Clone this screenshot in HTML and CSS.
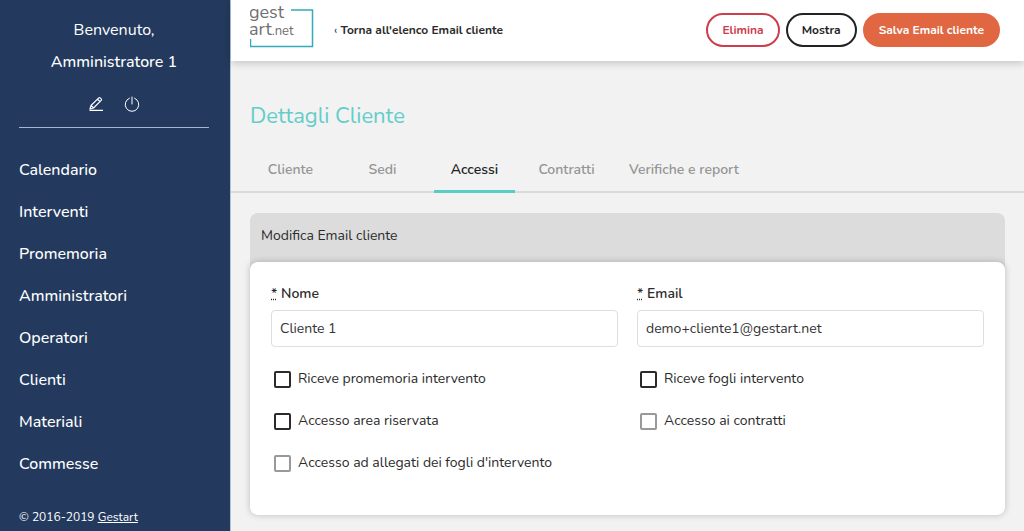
FILE: index.html
```html
<!DOCTYPE html>
<html lang="it">
<head>
<meta charset="utf-8">
<meta name="viewport" content="width=device-width, initial-scale=1">
<title>Dettagli Cliente</title>
<link rel="stylesheet" href="styles.css">
</head>
<body>
<div class="app">
  <aside class="sidebar">
    <div class="welcome">
      <p class="welcome-line">Benvenuto,</p>
      <p class="welcome-line welcome-name">Amministratore 1</p>
      <div class="welcome-actions">
        <a href="#" class="icon-link" aria-label="Modifica profilo">
          <svg width="16" height="16" viewBox="0 0 16 16" fill="none" stroke="currentColor" stroke-width="1.200" stroke-linejoin="round"><path d="M3 9.500 10.800 1.900Q11.500 1.300 12.200 1.900L13.200 2.900Q13.900 3.600 13.200 4.300L5.500 12 2 13zM9.500 3.200 12 5.600M3 9.500 5.500 12M1.500 14.400H15"/></svg>
        </a>
        <a href="#" class="icon-link" aria-label="Esci">
          <svg width="16" height="16" viewBox="0 0 16 16" fill="none" stroke="currentColor" stroke-linecap="round"><path d="M8 1V8M5.400 2.200A6.800 6.800 0 1 0 10.600 2.200"/></svg>
        </a>
      </div>
    </div>
    <nav class="menu">
      <a href="#">Calendario</a>
      <a href="#">Interventi</a>
      <a href="#">Promemoria</a>
      <a href="#">Amministratori</a>
      <a href="#">Operatori</a>
      <a href="#">Clienti</a>
      <a href="#">Materiali</a>
      <a href="#">Commesse</a>
    </nav>
    <footer class="copyright">© 2016-2019 <a href="#">Gestart</a></footer>
  </aside>
  <div class="content">
    <header class="topbar">
      <a href="#" class="logo" aria-label="gestart.net">
        <svg width="64" height="48" viewBox="0 0 64 48">
          <path d="M41 10H62.500V46.500H0.500V39" fill="none" stroke="#35a9bd" stroke-width="1.500"/>
          <text class="logo-text" x="-1" y="18">gest</text>
          <text class="logo-text" x="-1" y="35">art<tspan class="logo-small">.net</tspan></text>
        </svg>
      </a>
      <a href="#" class="back"><span class="chevron">‹</span> Torna all'elenco Email cliente</a>
      <div class="actions">
        <button type="button" class="btn btn-danger">Elimina</button>
        <button type="button" class="btn btn-dark">Mostra</button>
        <button type="submit" form="client-form" class="btn btn-primary">Salva Email cliente</button>
      </div>
    </header>
    <main>
      <h1 class="title">Dettagli Cliente</h1>
      <nav class="tabs">
        <a href="#" class="tab">Cliente</a>
        <a href="#" class="tab">Sedi</a>
        <a href="#" class="tab active" aria-current="page">Accessi</a>
        <a href="#" class="tab">Contratti</a>
        <a href="#" class="tab">Verifiche e report</a>
      </nav>
      <section class="panel">
        <h2 class="panel-title">Modifica Email cliente</h2>
        <form class="card" id="client-form">
          <div class="field">
            <label for="name"><abbr title="obbligatorio">*</abbr> Nome</label>
            <input type="text" id="name" value="Cliente 1">
          </div>
          <div class="field">
            <label for="email"><abbr title="obbligatorio">*</abbr> Email</label>
            <input type="email" id="email" value="demo+cliente1@gestart.net">
          </div>
          <label class="check"><input type="checkbox"> Riceve promemoria intervento</label>
          <label class="check"><input type="checkbox"> Riceve fogli intervento</label>
          <label class="check"><input type="checkbox"> Accesso area riservata</label>
          <label class="check"><input type="checkbox" disabled> Accesso ai contratti</label>
          <label class="check"><input type="checkbox" disabled> Accesso ad allegati dei fogli d'intervento</label>
        </form>
      </section>
    </main>
  </div>
</div>
</body>
</html>
```
FILE: styles.css
```css
* {
  box-sizing: border-box;
}

body {
  margin: 0;
  background: #f2f2f2;
  color: #2b2b2b;
  font: 14px/20px "Nunito", "Open Sans", "Noto Sans", sans-serif;
}

a {
  color: inherit;
  text-decoration: none;
}

.app {
  display: flex;
  min-height: 100vh;
}

.sidebar {
  display: flex;
  flex-direction: column;
  flex: 0 0 231px;
  padding: 14px 21px 4px 19px;
  border-right: 1px solid #b4c0dc;
  background: #233a5e;
  color: #fff;
  font-size: 16px;
}

.welcome {
  padding-bottom: 15px;
  border-bottom: 1px solid #a5b6d0;
  text-align: center;
}

.welcome-line {
  margin: 0;
  line-height: 32px;
}

.welcome-name,
.menu {
  font-weight: 500;
}

.welcome-actions {
  display: flex;
  justify-content: center;
  gap: 20px;
  margin-top: 18px;
}

.icon-link,
.logo {
  display: flex;
}

.logo {
  align-self: flex-start;
}

.menu {
  display: flex;
  flex-direction: column;
  margin-top: 21px;
  line-height: 42px;
}

.copyright {
  margin-top: auto;
  font-size: 12px;
}

.copyright a {
  text-decoration: underline;
}

.content {
  flex: 1;
  min-width: 0;
}

.topbar {
  display: flex;
  align-items: center;
  height: 61px;
  padding: 0 24px 1px 19px;
  background: #fff;
  box-shadow: 0 2px 8px rgba(0, 0, 0, 0.2);
}

.logo-text {
  fill: #707070;
  font: 18px "Nunito", Lato, sans-serif;
}

.logo-small {
  font-size: 13px;
}

.back {
  margin-left: 20px;
  font-size: 12px;
  font-weight: 700;
}

.chevron {
  font-weight: 400;
}

.actions {
  display: flex;
  gap: 6px;
  margin-left: auto;
}

.btn {
  height: 34px;
  padding: 0 14px;
  border: 2px solid currentColor;
  border-radius: 17px;
  background: #fff;
  font: 700 12px/20px "Nunito", "Open Sans", "Noto Sans", sans-serif;
}

.btn-danger {
  color: #cf3d4c;
}

.btn-dark {
  color: #222;
}

.btn-primary {
  border-color: #e06742;
  background: #e06742;
  color: #fff;
}

.title {
  margin: 0;
  padding: 39px 19px 0;
  color: #63cdca;
  font-size: 22px;
  font-weight: 400;
  line-height: 32px;
}

.tabs {
  display: flex;
  gap: 11px;
  padding: 17px 19px 0;
  border-bottom: 2px solid #dadada;
  color: #959595;
  font-weight: 600;
}

.tab {
  min-width: 81px;
  margin-bottom: -2px;
  padding: 11px 11px 10px;
  border-bottom: 3px solid transparent;
  text-align: center;
}

.active {
  border-color: #5accc8;
  color: #222;
}

.panel {
  margin: 20px 19px 16px;
  border-radius: 8px;
  background: #dcdcdc;
}

.panel-title {
  margin: 0;
  padding: 13px 11px 16px;
  font-size: 14px;
  font-weight: 400;
  line-height: 20px;
}

.card {
  display: grid;
  grid-template-columns: 1fr 1fr;
  gap: 22px 19px;
  padding: 22px 21px 42px;
  border-radius: 8px;
  background: #fff;
  box-shadow: 0 0 7px rgba(0, 0, 0, 0.22);
}

.field {
  display: flex;
  flex-direction: column;
  gap: 6px;
  font-size: 14px;
  font-weight: 600;
}

.field input {
  width: 100%;
  height: 37px;
  padding: 0 8px;
  border: 1px solid #dedede;
  border-radius: 4px;
  background: #fff;
  color: #333;
  font: 14px "Nunito", "Open Sans", "Noto Sans", sans-serif;
}

.check {
  display: flex;
  align-items: center;
  gap: 7px;
  padding-left: 3px;
  font-size: 14px;
}

.check input {
  appearance: none;
  width: 17px;
  height: 17px;
  margin: 0;
  border: 2px solid #2b2b2b;
  border-radius: 2px;
}

.check input:disabled {
  border-color: #999;
}
```
